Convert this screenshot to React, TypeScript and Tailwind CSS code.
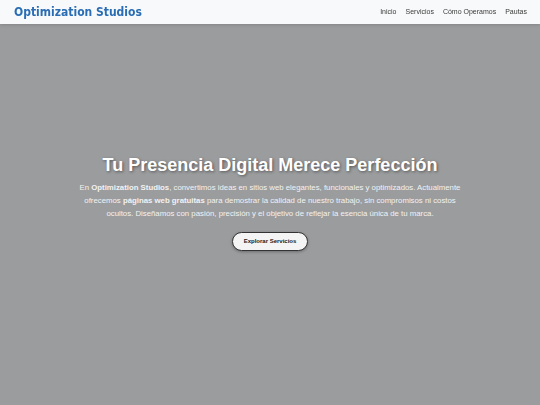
const links = ["Inicio", "Servicios", "Cómo Operamos", "Pautas"];

function Header() {
  return (
    <header className="fixed top-0 left-0 right-0 z-10 h-[24px] bg-[#f8f9fa] shadow-[0_1px_3px_rgba(0,0,0,0.15)] flex items-center justify-between pl-[14px] pr-[13px]">
      <span className="font-['DejaVu_Sans_Condensed','DejaVu_Sans',sans-serif] font-bold text-[12px] text-[#2a6db5]">
        Optimization Studios
      </span>
      <nav className="flex items-center gap-[9px] font-['Liberation_Sans',Arial,sans-serif] text-[7px] text-[#3a3a3a]">
        {links.map((l) => (
          <a key={l} href="#">
            {l}
          </a>
        ))}
      </nav>
    </header>
  );
}

export default function App() {
  return (
    <div className="min-h-[405px] font-['Liberation_Sans',Arial,sans-serif]">
      <Header />
      <section className="h-[405px] bg-[#9b9c9e] flex flex-col items-center justify-center text-center px-6 pb-[4px]">
        <h1 className="text-[18px] font-bold text-white leading-tight [text-shadow:1px_1px_3px_rgba(0,0,0,0.45)] mb-[5px] mt-[4px]">
          Tu Presencia Digital Merece Perfección
        </h1>
        <p className="max-w-[392px] text-[7.8px] leading-[13px] text-[#f2f2f2]">
          En <span className="font-bold">Optimization Studios</span>, convertimos ideas en sitios web elegantes,
          funcionales y optimizados. Actualmente ofrecemos <span className="font-bold">páginas web gratuitas</span> para
          demostrar la calidad de nuestro trabajo, sin compromisos ni costos ocultos. Diseñamos con pasión, precisión y
          el objetivo de reflejar la esencia única de tu marca.
        </p>
        <button className="mt-[12px] h-[19px] px-[11px] rounded-full bg-[#f4f4f4] border border-[#333] shadow-[0_1px_3px_rgba(0,0,0,0.3)] text-[6px] font-bold text-[#222]">
          Explorar Servicios
        </button>
      </section>
    </div>
  );
}
